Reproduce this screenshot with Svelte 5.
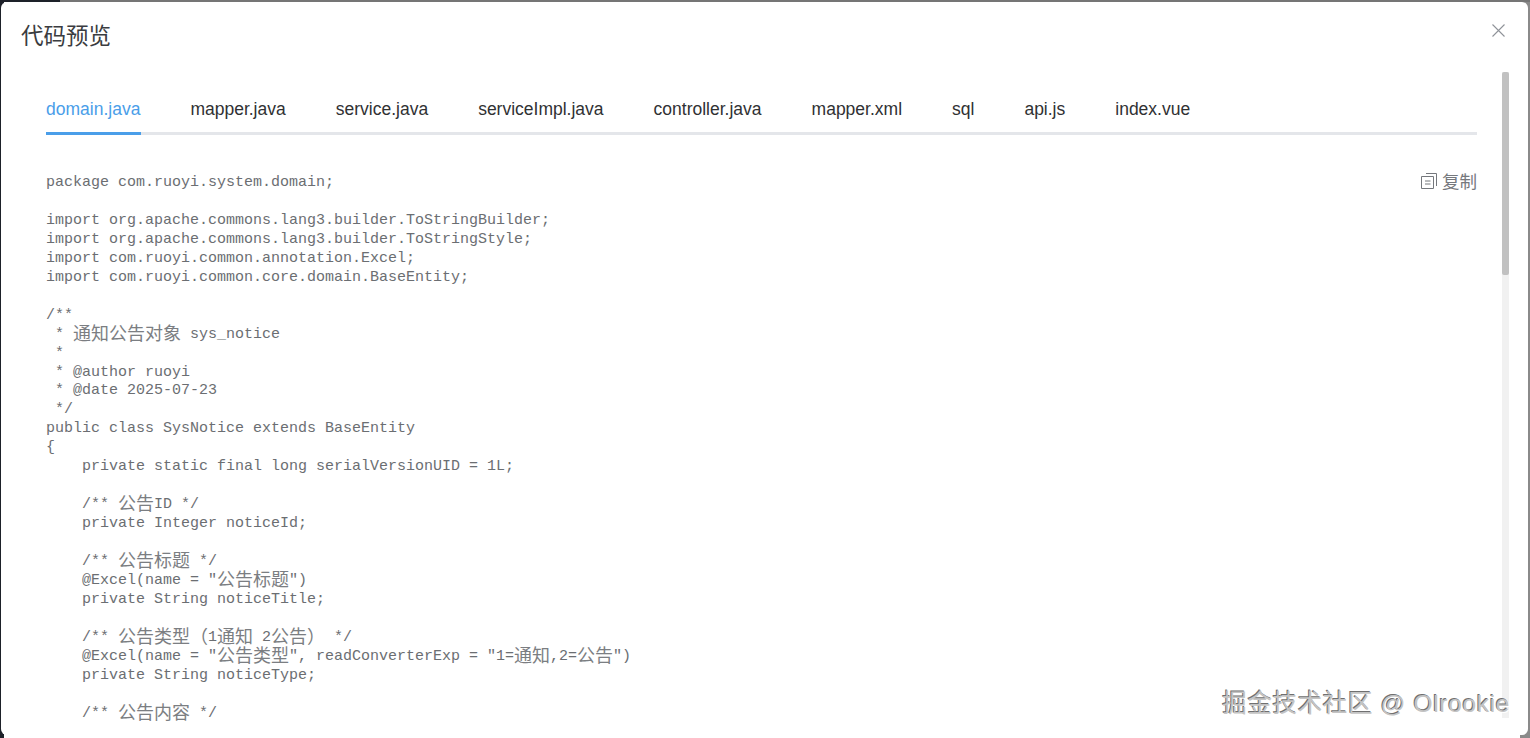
<script>
  const tabs = ['domain.java', 'mapper.java', 'service.java', 'serviceImpl.java', 'controller.java', 'mapper.xml', 'sql', 'api.js', 'index.vue'];
  const source = `package com.ruoyi.system.domain;

import org.apache.commons.lang3.builder.ToStringBuilder;
import org.apache.commons.lang3.builder.ToStringStyle;
import com.ruoyi.common.annotation.Excel;
import com.ruoyi.common.core.domain.BaseEntity;

/**
 * 通知公告对象 sys_notice
 *
 * @author ruoyi
 * @date 2025-07-23
 */
public class SysNotice extends BaseEntity
{
    private static final long serialVersionUID = 1L;

    /** 公告ID */
    private Integer noticeId;

    /** 公告标题 */
    @Excel(name = "公告标题")
    private String noticeTitle;

    /** 公告类型（1通知 2公告） */
    @Excel(name = "公告类型", readConverterExp = "1=通知,2=公告")
    private String noticeType;

    /** 公告内容 */`;
  const lines = source.split('\n').map((line) =>
    line.split(/([\u3000-\u9fff\uff00-\uffef]+)/).filter(Boolean).map((t) => ({ t, cjk: /[\u3000-\u9fff\uff00-\uffef]/.test(t) }))
  );
</script>

<div class="page">
  <div class="modal">
    <header class="head">
      <h2 class="title">代码预览</h2>
      <button class="close" aria-label="关闭">
        <svg width="13" height="13" viewBox="0 0 13 13"><path d="M.5.5l12 12M12.5.5l-12 12" /></svg>
      </button>
    </header>
    <div class="body">
      <div class="content">
        <nav class="tabs">
          {#each tabs as tab, i}
            <div class="tab" class:active={i === 0}>{tab}</div>
          {/each}
        </nav>
        <div class="code">
          <button class="copy">
            <svg width="16" height="16" viewBox="0 0 16 16"><path d="M.5 3.5h12v12H.5zM5 .5h10.5V13M4 8h5.5M4 11h5.5" /></svg>
            <span>复制</span>
          </button>
          <pre>{#each lines as segs}<div class="line">{#each segs as s}<span class:cjk={s.cjk}>{s.t}</span>{/each}</div>{/each}</pre>
        </div>
      </div>
      <div class="track"><div class="thumb"></div></div>
    </div>
  </div>
  <div class="mark">掘金技术社区 @ Olrookie</div>
</div>

<style>
  :global(body) { margin: 0; background: #fff; }
  .page {
    position: relative;
    box-sizing: border-box;
    height: 738px;
    overflow: hidden;
    padding: 2px 2px 0 1px;
    background: linear-gradient(90deg, #1d2129 0, #1d2129 60px, #757575 60px);
    font-family: "Liberation Sans", "Noto Sans CJK SC", sans-serif;
  }
  .page::before {
    content: '';
    position: absolute;
    inset: 2px 0 0 0;
    background: linear-gradient(90deg, #1d2129 0, #1d2129 4px, #fff 4px, #fff 1520px, #8a8a8a 1520px);
    z-index: 0;
  }
  .modal {
    position: relative;
    z-index: 1;
    display: flex;
    flex-direction: column;
    box-sizing: border-box;
    height: 733px;
    background: #fff;
    border-radius: 6px;
    overflow: hidden;
  }
  .head {
    display: flex;
    justify-content: space-between;
    align-items: flex-start;
    height: 70px;
    flex: none;
    padding: 19px 23px 0 20px;
    box-sizing: border-box;
  }
  .title {
    margin: 0;
    font-size: 22.5px;
    font-weight: 400;
    line-height: 32px;
    color: #3a3c40;
  }
  .close {
    display: block;
    padding: 0;
    margin-top: 3px;
    border: 0;
    background: none;
    line-height: 0;
  }
  .close svg { stroke: #8f9399; stroke-width: 1.1; fill: none; }
  .body {
    display: flex;
    flex: 1;
    min-height: 0;
    padding-right: 19px;
  }
  .content {
    flex: 1;
    min-width: 0;
    padding: 0 25px 0 45px;
    overflow: hidden;
  }
  .tabs {
    display: flex;
    gap: 50px;
    height: 63px;
    box-sizing: border-box;
    border-bottom: 3px solid #e4e6ea;
    align-items: stretch;
  }
  .tab {
    box-sizing: border-box;
    height: 63px;
    padding-top: 25px;
    font-size: 17.5px;
    line-height: 24px;
    color: #303133;
    white-space: nowrap;
  }
  .tab.active {
    color: #4a9ee9;
    border-bottom: 3px solid #4a9ee9;
    padding-right: 1px;
    margin-right: -1px;
  }
  .code {
    position: relative;
    padding-top: 38px;
  }
  pre {
    margin: 0;
    font-family: "Liberation Mono", monospace;
    font-size: 15px;
    color: #6b6e72;
  }
  .line {
    height: 18.96px;
    line-height: 19px;
    white-space: pre;
  }
  .cjk {
    font-family: "Noto Sans CJK SC", sans-serif;
    font-size: 18px;
    line-height: 0;
    vertical-align: -2px;
    color: #7b7e82;
  }
  .copy {
    position: absolute;
    top: 36px;
    right: 0;
    display: flex;
    align-items: center;
    gap: 5px;
    padding: 0;
    border: 0;
    background: none;
    font-family: "Noto Sans CJK SC", sans-serif;
    font-size: 17.5px;
    line-height: 20px;
    color: #75787d;
  }
  .copy svg { stroke: #75787d; fill: none; stroke-width: 1; }
  .track {
    flex: none;
    width: 7px;
    height: 646px;
    background: #f1f1f1;
  }
  .thumb {
    height: 203px;
    background: #c1c1c1;
    border-radius: 2px;
  }
  .mark {
    position: absolute;
    z-index: 2;
    right: 20px;
    top: 688px;
    font-size: 24.5px;
    letter-spacing: 0.65px;
    line-height: 32px;
    white-space: nowrap;
    color: #c4c4c4;
    text-shadow: -1px -1px 0 #707070, 1px 1px 0 #fff;
  }
</style>
